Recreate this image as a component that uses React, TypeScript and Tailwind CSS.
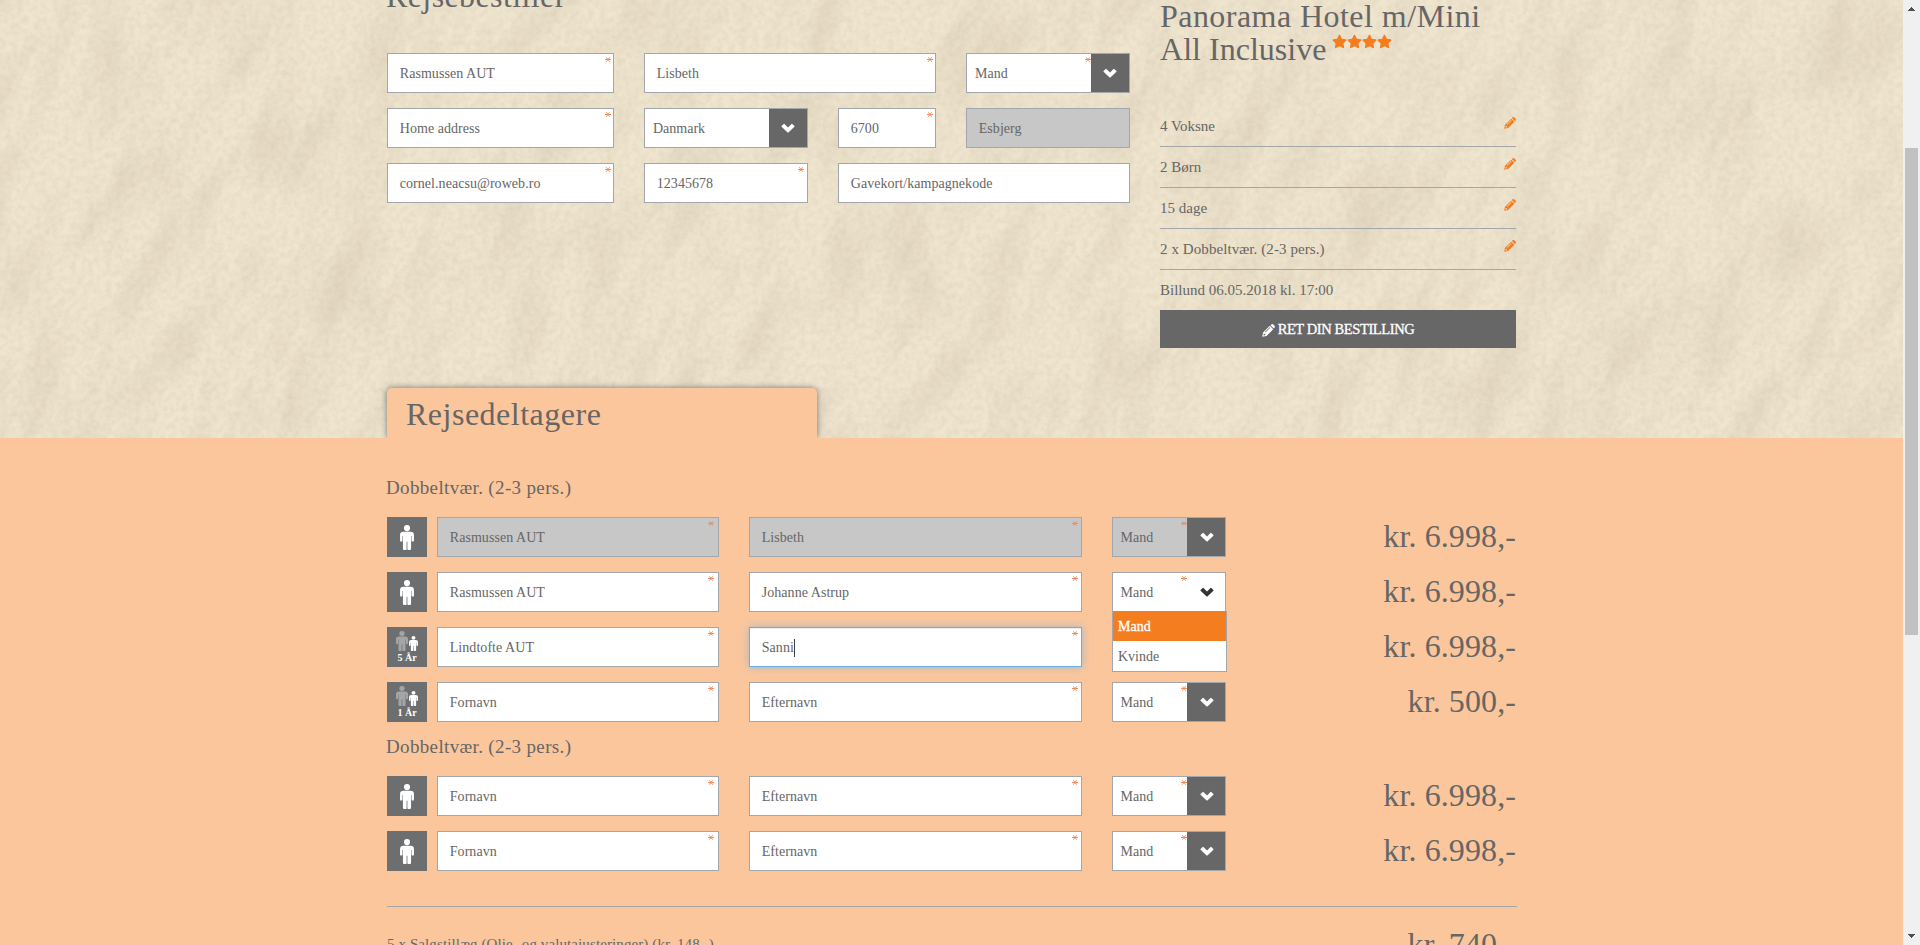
import type { ReactNode } from "react";
import { FaStar } from "react-icons/fa";

function Chevron({ className }: { className: string }) {
  return (
    <svg viewBox="0 0 14 10" className={`h-2.5 w-3.5 ${className}`} fill="currentColor">
      <path d="M.6 3 2.700.9Q3.100.5 3.500.9L7 4.400 10.500.9Q10.900.5 11.300.9L13.400 3Q13.800 3.400 13.400 3.800L7.400 9.400Q7 9.800 6.600 9.400L.6 3.800Q.2 3.400.6 3Z" />
    </svg>
  );
}

function Pencil({ className }: { className: string }) {
  return (
    <svg viewBox="0 0 13 13" className={className} fill="currentColor">
      <path d="M8.500 1.200 9.400.4Q10.400-.3 11.300.5L12.500 1.700Q13.300 2.600 12.600 3.600L11.800 4.500Z" />
      <path
        fillRule="evenodd"
        d="M7.800 1.800 11.200 5.200 4.500 11.900.2 12.800 1.100 8.500ZM1.900 9.700 1.500 11.100 1.900 11.500 3.300 11.100 3.200 9.900ZM7.700 3.200 3 7.900 3.500 8.400 8.200 3.700Z"
      />
    </svg>
  );
}

function Required({ className }: { className: string }) {
  return (
    <svg viewBox="0 0 6 6" className={`absolute top-0.5 h-1.5 w-1.5 ${className}`} stroke="#f58b58" strokeWidth="1" fill="none">
      <path d="M0 3.500H6M1.300 1.300 4.700 5.700M4.700 1.300 1.300 5.700" />
    </svg>
  );
}

function Field({
  text,
  width,
  star = "right-[2px]",
  required = true,
  disabled = false,
  focused = false,
}: {
  text: string;
  width: string;
  star?: string;
  required?: boolean;
  disabled?: boolean;
  focused?: boolean;
}) {
  const border = focused
    ? "border-[#66afe9] shadow-[inset_0_1px_1px_rgba(0,0,0,0.075),0_0_8px_rgba(102,175,233,0.6)]"
    : "border-[#a3a6aa]";
  return (
    <div
      className={`relative flex h-10 shrink-0 items-center border pl-[11.75px] text-sm ${border} ${disabled ? "bg-[#c7c7c7]" : "bg-white"} ${width}`}
    >
      <span className="mt-0.5 whitespace-nowrap tracking-[0.05px]">{text}</span>
      {focused && <span className="mt-0.5 h-[18px] w-px bg-[#444]" />}
      {required && <Required className={star} />}
    </div>
  );
}

function Select({
  text,
  width,
  pad = "pl-2",
  chevron = "",
  required = true,
  disabled = false,
  open = false,
}: {
  text: string;
  width: string;
  pad?: string;
  chevron?: string;
  required?: boolean;
  disabled?: boolean;
  open?: boolean;
}) {
  return (
    <div
      className={`relative flex h-10 shrink-0 items-stretch border border-[#a3a6aa] text-sm ${disabled ? "bg-[#c7c7c7]" : "bg-white"} ${width}`}
    >
      <div className={`relative flex flex-1 items-center pt-0.5 ${pad}`}>
        {text}
        {required && <Required className="right-0" />}
      </div>
      <div className={`flex w-[38px] items-center justify-center ${open ? "bg-white text-[#333]" : "bg-[#676767] text-white"}`}>
        <Chevron className={chevron} />
      </div>
      {open && (
        <div className="absolute -left-px top-[38px] z-10 w-[115px] border border-t-0 border-[#a3a6aa] bg-white">
          <div className="flex h-[30px] items-center bg-[#f47d20] pl-[5px] pt-0.5 text-white [-webkit-text-stroke:0.3px_white]">Mand</div>
          <div className="flex h-[30px] items-center pl-[5px] pt-0.5">Kvinde</div>
        </div>
      )}
    </div>
  );
}

const personPath =
  "M7 0a3 3 0 0 1 0 6.200a3 3 0 0 1 0-6.200ZM3.500 6.800h7Q14 6.800 14 10v5.500a1.200 1.200 0 0 1-2.400 0v-4.500h-.5V24a1.300 1.300 0 0 1-1.500 1.200H8.300a1 1 0 0 1-.9-1.200V17h-.8V24a1 1 0 0 1-.9 1.200H4.400A1.300 1.300 0 0 1 2.900 24V11h-.5v4.500a1.200 1.200 0 0 1-2.400 0V10Q0 6.800 3.500 6.800Z";

function PersonBadge({ age }: { age?: string }) {
  return (
    <div className="mr-2.5 flex h-10 w-10 shrink-0 flex-col items-center bg-[#6d6e70] text-white">
      {age ? (
        <>
          <div className="mt-1 flex h-5 items-end">
            <svg viewBox="0 0 14 25.2" preserveAspectRatio="none" className="h-5 w-3 text-[#a3a5a7]" fill="currentColor">
              <path d={personPath} />
            </svg>
            <svg viewBox="0 0 14 25.2" preserveAspectRatio="none" className="ml-px h-[15px] w-[9px]" fill="currentColor">
              <path d={personPath} />
            </svg>
          </div>
          <span className="mt-px text-[10px] leading-[11px] font-bold">{age}</span>
        </>
      ) : (
        <svg viewBox="0 0 14 25.2" className="mt-2 h-[25px] w-3.5" fill="currentColor">
          <path d={personPath} />
        </svg>
      )}
    </div>
  );
}

type Traveller = {
  first: string;
  last: string;
  price: string;
  age?: string;
  disabled?: boolean;
  focused?: boolean;
  open?: boolean;
};

function TravellerRow({ t }: { t: Traveller }) {
  return (
    <div className="flex">
      <PersonBadge age={t.age} />
      <Field text={t.first} width="w-[282px]" star="right-1" disabled={t.disabled} />
      <div className="w-[30px] shrink-0" />
      <Field text={t.last} width="w-[333px]" star="right-[3px]" disabled={t.disabled} focused={t.focused} />
      <div className="w-[30px] shrink-0" />
      <Select text="Mand" width="w-[114px]" pad="pl-[7.5px]" chevron="ml-0.5" disabled={t.disabled} open={t.open} />
      <div className="-mt-px flex-1 pr-px text-right text-[32px] leading-10 tracking-[0.1px]">{t.price}</div>
    </div>
  );
}

const roomOne: Traveller[] = [
  { first: "Rasmussen AUT", last: "Lisbeth", price: "kr. 6.998,-", disabled: true },
  { first: "Rasmussen AUT", last: "Johanne Astrup", price: "kr. 6.998,-", open: true },
  { first: "Lindtofte AUT", last: "Sanni", price: "kr. 6.998,-", age: "5 År", focused: true },
  { first: "Fornavn", last: "Efternavn", price: "kr. 500,-", age: "1 År" },
];
const roomTwo: Traveller[] = [
  { first: "Fornavn", last: "Efternavn", price: "kr. 6.998,-" },
  { first: "Fornavn", last: "Efternavn", price: "kr. 6.998,-" },
];

function Room({ rows, heading }: { rows: Traveller[]; heading: string }) {
  return (
    <div>
      <h3 className={`-ml-px text-[19px] leading-6 tracking-[0.35px] ${heading}`}>Dobbeltvær. (2-3 pers.)</h3>
      <div className="flex flex-col gap-[15px]">
        {rows.map((t, i) => (
          <TravellerRow key={i} t={t} />
        ))}
      </div>
    </div>
  );
}

function SandTexture() {
  return (
    <svg className="absolute inset-0 h-full w-full" aria-hidden="true">
      <defs>
        <filter id="folds" x="0" y="0" width="100%" height="100%" colorInterpolationFilters="sRGB">
          <feTurbulence type="fractalNoise" baseFrequency="0.028 0.009" numOctaves="4" seed="11" />
          <feColorMatrix values="0 0 0 0 0.76  0 0 0 0 0.71  0 0 0 0 0.62  1.8 0 0 0 -0.72" />
        </filter>
        <filter id="grain" x="0" y="0" width="100%" height="100%" colorInterpolationFilters="sRGB">
          <feTurbulence type="fractalNoise" baseFrequency="0.17" numOctaves="5" seed="4" />
          <feColorMatrix values="0 0 0 0 0.74  0 0 0 0 0.69  0 0 0 0 0.59  1.5 0 0 0 -0.5" />
        </filter>
      </defs>
      <g transform="rotate(22 950 220)">
        <rect x="-300" y="-800" width="2500" height="2000" filter="url(#folds)" opacity="0.32" />
      </g>
      <rect width="100%" height="100%" filter="url(#grain)" opacity="0.24" />
    </svg>
  );
}

function SummaryRow({ children }: { children: ReactNode }) {
  return (
    <div className="flex h-[41px] items-start justify-between border-b border-[#a3a6aa] pt-2.5 text-[15px] leading-5">
      <span>{children}</span>
      <Pencil className="mt-px h-3 w-3 text-[#f47d20]" />
    </div>
  );
}

export default function App() {
  return (
    <div className="flex h-[945px] w-full overflow-hidden font-['Liberation_Serif',serif] text-[#666]">
      <main className="flex w-[1903px] shrink-0 flex-col bg-[#fbc69c]">
        <section className="relative h-[438px] shrink-0 overflow-hidden bg-[#f0e5cf]">
          <SandTexture />
          <div className="relative ml-[387px] flex h-full w-[1130px] flex-col justify-between">
            <div className="flex justify-between">
              <div className="w-[743px]">
                <h2 className="-ml-px -mt-[23px] mb-[38px] text-[32px] leading-[38px] tracking-[0.4px]">Rejsebestiller</h2>
                <div className="flex flex-col gap-[15px]">
                  <div className="flex gap-[30px]">
                    <Field text="Rasmussen AUT" width="w-[227px]" />
                    <Field text="Lisbeth" width="w-[292px]" />
                    <Select text="Mand" width="w-[164px]" />
                  </div>
                  <div className="flex gap-[30px]">
                    <Field text="Home address" width="w-[227px]" />
                    <Select text="Danmark" width="w-[164px]" required={false} />
                    <Field text="6700" width="w-[98px]" />
                    <Field text="Esbjerg" width="w-[164px]" required={false} disabled />
                  </div>
                  <div className="flex gap-[30px]">
                    <Field text="cornel.neacsu@roweb.ro" width="w-[227px]" />
                    <Field text="12345678" width="w-[164px]" star="right-[3px]" />
                    <Field text="Gavekort/kampagnekode" width="w-[292px]" required={false} />
                  </div>
                </div>
              </div>
              <aside className="mr-px w-[356px]">
                <h2 className="h-[106px] text-[32px] leading-[33px] tracking-[0.45px]">
                  Panorama Hotel m/Mini
                  <br />
                  <span className="inline-flex items-start">
                    <span className="tracking-[0.02px]">All Inclusive</span>
                    <span className="ml-1.5 mt-px flex text-[#f47d20]">
                      {[0, 1, 2, 3].map((i) => (
                        <FaStar key={i} className="h-[15px] w-[15px]" />
                      ))}
                    </span>
                  </span>
                </h2>
                <SummaryRow>4 Voksne</SummaryRow>
                <SummaryRow>2 Børn</SummaryRow>
                <SummaryRow>15 dage</SummaryRow>
                <SummaryRow>
                  <span className="tracking-[0.08px]">2 x Dobbeltvær. (2-3 pers.)</span>
                </SummaryRow>
                <div className="h-10 pt-2.5 text-[15px] leading-5">Billund 06.05.2018 kl. 17:00</div>
                <button className="flex h-[38px] w-full items-center justify-center gap-[3px] bg-[#676767] pt-0.5 text-[14.5px] tracking-[-0.4px] text-white [-webkit-text-stroke:0.3px_white]">
                  <Pencil className="h-[13px] w-[13px]" />
                  RET DIN BESTILLING
                </button>
              </aside>
            </div>
            <div className="h-[50px] w-[430px] rounded-t-[5px] bg-[#fbc69c] pl-[19px] pt-[7px] shadow-[0_0_6px_rgba(80,90,100,0.8)]">
              <h2 className="text-[32px] leading-[38px] tracking-[0.5px]">Rejsedeltagere</h2>
            </div>
          </div>
        </section>
        <section className="ml-[387px] flex w-[1130px] flex-col">
          <Room rows={roomOne} heading="mt-[38px] mb-[17px]" />
          <Room rows={roomTwo} heading="mt-[13px] mb-[17px]" />
          <div className="mt-[35px] border-t border-[#a3a6aa]" />
          <div className="flex items-start justify-between pt-[17px]">
            <span className="mt-2.5 text-[15px] leading-5 tracking-[0.1px]">5 x Salgstillæg (Olie- og valutajusteringer) (kr. 148,-)</span>
            <span className="pr-px text-[32px] leading-10 tracking-[0.1px]">kr. 740,-</span>
          </div>
        </section>
      </main>
      <div className="flex flex-1 flex-col items-center bg-[#f0f0f0]">
        <svg viewBox="0 0 7 4" className="mt-[7px] h-1 w-[7px] shrink-0" fill="#505050">
          <path d="M3 0h1v1h1v1h1v1h1v1H0V3h1V2h1V1h1z" />
        </svg>
        <div className="mt-[137px] h-[487px] w-[13px] shrink-0 bg-[#c1c1c1]" />
        <svg viewBox="0 0 7 4" className="mt-auto mb-[7px] h-1 w-[7px] shrink-0" fill="#505050">
          <path d="M3 4h1V3h1V2h1V1h1V0H0v1h1v1h1v1h1z" />
        </svg>
      </div>
    </div>
  );
}
